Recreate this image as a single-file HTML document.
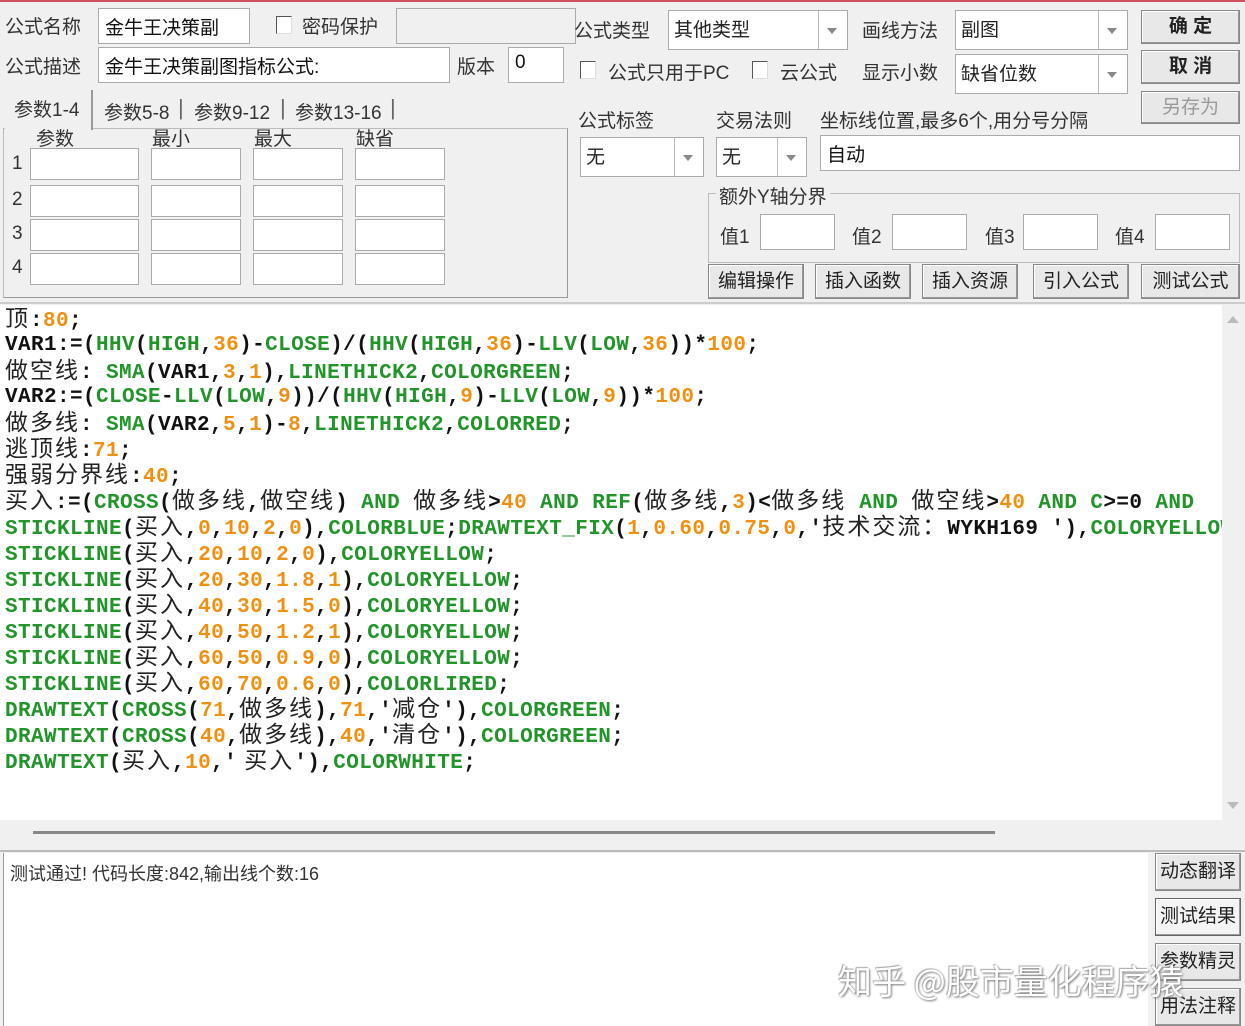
<!DOCTYPE html>
<html><head><meta charset="utf-8"><style>
*{margin:0;padding:0;box-sizing:border-box}
body{width:1245px;height:1026px;background:#f0f0f0;position:relative;overflow:hidden;font-family:"Liberation Sans","Noto Sans CJK SC",sans-serif;font-size:19px;color:#222}
.a{position:absolute}
.l{position:absolute;white-space:nowrap;color:#333}
.in{position:absolute;background:#fff;border:1px solid #aaa;white-space:nowrap;padding:4px 6px;font-size:19px;color:#111}
.dd{position:absolute;background:#fff;border:1px solid #aaa;padding:4px 5px;font-size:19px}
.dd::after{content:"";position:absolute;right:0;top:0;bottom:0;width:28px;border-left:1px solid #bbb;background:#fff}
.dd::before{content:"";position:absolute;right:10px;top:50%;margin-top:-2px;border:5px solid transparent;border-top:6px solid #888;z-index:2}
.btn{position:absolute;background:#e8e8e8;border:1px solid #888;box-shadow:inset -1px -1px 0 #999,inset 1px 1px 0 #fff;text-align:center;font-size:19px;color:#222;white-space:nowrap}
.cb{position:absolute;width:16px;height:18px;border:1px solid #555;border-right-color:#ddd;border-bottom-color:#ddd;background:#fff}
.code{position:absolute;left:0;top:305px;width:1222px;height:515px;background:#fff;overflow:hidden}
.code pre{position:absolute;left:5px;top:2px;font-family:"Liberation Mono",monospace;font-weight:bold;font-size:21px;letter-spacing:0.4px;line-height:26px;color:#111}
.code pre div{height:26px}
.g{color:#22952a}.o{color:#f09010}
.c{font-family:"Noto Sans CJK SC",sans-serif;font-weight:normal;font-size:23px;letter-spacing:2px;color:#222;line-height:18px}
</style></head><body>
<div class="a" style="left:0;top:0;width:1245px;height:2px;background:#d05060"></div>

<div class="l" style="left:5px;top:12px">公式名称</div>
<div class="in" style="left:98px;top:8px;width:152px;height:36px">金牛王决策副</div>
<div class="cb" style="left:276px;top:16px"></div>
<div class="l" style="left:302px;top:12px">密码保护</div>
<div class="in" style="left:396px;top:8px;width:180px;height:36px;background:#f0f0f0"></div>
<div class="l" style="left:5px;top:52px">公式描述</div>
<div class="in" style="left:98px;top:47px;width:352px;height:36px">金牛王决策副图指标公式:</div>
<div class="l" style="left:457px;top:52px">版本</div>
<div class="in" style="left:508px;top:47px;width:56px;height:36px">0</div>

<div class="a" style="left:3px;top:128px;width:565px;height:170px;border:1px solid #bbb;border-right-color:#999;border-bottom-color:#999"></div>
<div class="a" style="left:5px;top:90px;width:88px;height:40px;background:#f0f0f0;border-right:2px solid #999"></div>
<div class="l" style="left:14px;top:95px">参数1-4</div>
<div class="l" style="left:104px;top:98px">参数5-8</div>
<div class="l" style="left:178px;top:95px;font-size:22px;color:#666">|</div>
<div class="l" style="left:194px;top:98px">参数9-12</div>
<div class="l" style="left:280px;top:95px;font-size:22px;color:#666">|</div>
<div class="l" style="left:295px;top:98px">参数13-16</div>
<div class="l" style="left:390px;top:95px;font-size:22px;color:#666">|</div>
<div class="l" style="left:36px;top:124px">参数</div>
<div class="l" style="left:152px;top:124px">最小</div>
<div class="l" style="left:254px;top:124px">最大</div>
<div class="l" style="left:356px;top:124px">缺省</div>
<div class="l" style="left:12px;top:153px">1</div><div class="l" style="left:12px;top:189px">2</div><div class="l" style="left:12px;top:223px">3</div><div class="l" style="left:12px;top:257px">4</div>
<div class="in" style="left:30px;top:148px;width:109px;height:32px"></div><div class="in" style="left:151px;top:148px;width:90px;height:32px"></div><div class="in" style="left:253px;top:148px;width:90px;height:32px"></div><div class="in" style="left:355px;top:148px;width:90px;height:32px"></div>
<div class="in" style="left:30px;top:185px;width:109px;height:32px"></div><div class="in" style="left:151px;top:185px;width:90px;height:32px"></div><div class="in" style="left:253px;top:185px;width:90px;height:32px"></div><div class="in" style="left:355px;top:185px;width:90px;height:32px"></div>
<div class="in" style="left:30px;top:219px;width:109px;height:32px"></div><div class="in" style="left:151px;top:219px;width:90px;height:32px"></div><div class="in" style="left:253px;top:219px;width:90px;height:32px"></div><div class="in" style="left:355px;top:219px;width:90px;height:32px"></div>
<div class="in" style="left:30px;top:253px;width:109px;height:32px"></div><div class="in" style="left:151px;top:253px;width:90px;height:32px"></div><div class="in" style="left:253px;top:253px;width:90px;height:32px"></div><div class="in" style="left:355px;top:253px;width:90px;height:32px"></div>

<div class="l" style="left:574px;top:16px">公式类型</div>
<div class="dd" style="left:668px;top:10px;width:180px;height:40px">其他类型</div>
<div class="l" style="left:862px;top:16px">画线方法</div>
<div class="dd" style="left:955px;top:10px;width:173px;height:40px">副图</div>
<div class="btn" style="left:1141px;top:10px;width:99px;height:34px;line-height:32px;font-weight:bold">确 定</div>
<div class="cb" style="left:580px;top:61px"></div>
<div class="l" style="left:608px;top:58px">公式只用于PC</div>
<div class="cb" style="left:752px;top:61px"></div>
<div class="l" style="left:780px;top:58px">云公式</div>
<div class="l" style="left:862px;top:58px">显示小数</div>
<div class="dd" style="left:955px;top:54px;width:173px;height:40px">缺省位数</div>
<div class="btn" style="left:1141px;top:50px;width:99px;height:34px;line-height:32px;font-weight:bold">取 消</div>
<div class="btn" style="left:1141px;top:91px;width:99px;height:33px;line-height:31px;color:#999">另存为</div>
<div class="l" style="left:578px;top:106px">公式标签</div>
<div class="l" style="left:716px;top:106px">交易法则</div>
<div class="l" style="left:820px;top:106px">坐标线位置,最多6个,用分号分隔</div>
<div class="dd" style="left:580px;top:137px;width:124px;height:40px">无</div>
<div class="dd" style="left:716px;top:137px;width:91px;height:40px">无</div>
<div class="in" style="left:820px;top:135px;width:420px;height:36px">自动</div>
<div class="a" style="left:708px;top:193px;width:532px;height:70px;border:1px solid #bbb"></div>
<div class="l" style="left:716px;top:182px;background:#f0f0f0;padding:0 3px">额外Y轴分界</div>
<div class="l" style="left:720px;top:222px">值1</div><div class="in" style="left:760px;top:214px;width:75px;height:36px"></div>
<div class="l" style="left:852px;top:222px">值2</div><div class="in" style="left:892px;top:214px;width:75px;height:36px"></div>
<div class="l" style="left:985px;top:222px">值3</div><div class="in" style="left:1023px;top:214px;width:75px;height:36px"></div>
<div class="l" style="left:1115px;top:222px">值4</div><div class="in" style="left:1155px;top:214px;width:75px;height:36px"></div>
<div class="btn" style="left:708px;top:264px;width:96px;height:35px;line-height:33px">编辑操作</div>
<div class="btn" style="left:815px;top:264px;width:96px;height:35px;line-height:33px">插入函数</div>
<div class="btn" style="left:922px;top:264px;width:96px;height:35px;line-height:33px">插入资源</div>
<div class="btn" style="left:1033px;top:264px;width:96px;height:35px;line-height:33px">引入公式</div>
<div class="btn" style="left:1141px;top:264px;width:99px;height:35px;line-height:33px">测试公式</div>

<div class="a" style="left:0;top:302px;width:1245px;height:2px;background:#ccc"></div>
<div class="code"><pre><div><span class="c">顶</span>:<span class="o">80</span>;</div><div>VAR1:=(<span class="g">HHV</span>(<span class="g">HIGH</span>,<span class="o">36</span>)-<span class="g">CLOSE</span>)/(<span class="g">HHV</span>(<span class="g">HIGH</span>,<span class="o">36</span>)-<span class="g">LLV</span>(<span class="g">LOW</span>,<span class="o">36</span>))*<span class="o">100</span>;</div><div><span class="c">做空线</span>: <span class="g">SMA</span>(VAR1,<span class="o">3</span>,<span class="o">1</span>),<span class="g">LINETHICK2</span>,<span class="g">COLORGREEN</span>;</div><div>VAR2:=(<span class="g">CLOSE</span>-<span class="g">LLV</span>(<span class="g">LOW</span>,<span class="o">9</span>))/(<span class="g">HHV</span>(<span class="g">HIGH</span>,<span class="o">9</span>)-<span class="g">LLV</span>(<span class="g">LOW</span>,<span class="o">9</span>))*<span class="o">100</span>;</div><div><span class="c">做多线</span>: <span class="g">SMA</span>(VAR2,<span class="o">5</span>,<span class="o">1</span>)-<span class="o">8</span>,<span class="g">LINETHICK2</span>,<span class="g">COLORRED</span>;</div><div><span class="c">逃顶线</span>:<span class="o">71</span>;</div><div><span class="c">强弱分界线</span>:<span class="o">40</span>;</div><div><span class="c">买入</span>:=(<span class="g">CROSS</span>(<span class="c">做多线</span>,<span class="c">做空线</span>) <span class="g">AND</span> <span class="c">做多线</span>&gt;<span class="o">40</span> <span class="g">AND</span> <span class="g">REF</span>(<span class="c">做多线</span>,<span class="o">3</span>)&lt;<span class="c">做多线</span> <span class="g">AND</span> <span class="c">做空线</span>&gt;<span class="o">40</span> <span class="g">AND</span> <span class="g">C</span>&gt;=0 <span class="g">AND</span></div><div><span class="g">STICKLINE</span>(<span class="c">买入</span>,<span class="o">0</span>,<span class="o">10</span>,<span class="o">2</span>,<span class="o">0</span>),<span class="g">COLORBLUE</span>;<span class="g">DRAWTEXT_FIX</span>(<span class="o">1</span>,<span class="o">0.60</span>,<span class="o">0.75</span>,<span class="o">0</span>,'<span class="c">技术交流：</span>WYKH169 '),<span class="g">COLORYELLOW</span></div><div><span class="g">STICKLINE</span>(<span class="c">买入</span>,<span class="o">20</span>,<span class="o">10</span>,<span class="o">2</span>,<span class="o">0</span>),<span class="g">COLORYELLOW</span>;</div><div><span class="g">STICKLINE</span>(<span class="c">买入</span>,<span class="o">20</span>,<span class="o">30</span>,<span class="o">1.8</span>,<span class="o">1</span>),<span class="g">COLORYELLOW</span>;</div><div><span class="g">STICKLINE</span>(<span class="c">买入</span>,<span class="o">40</span>,<span class="o">30</span>,<span class="o">1.5</span>,<span class="o">0</span>),<span class="g">COLORYELLOW</span>;</div><div><span class="g">STICKLINE</span>(<span class="c">买入</span>,<span class="o">40</span>,<span class="o">50</span>,<span class="o">1.2</span>,<span class="o">1</span>),<span class="g">COLORYELLOW</span>;</div><div><span class="g">STICKLINE</span>(<span class="c">买入</span>,<span class="o">60</span>,<span class="o">50</span>,<span class="o">0.9</span>,<span class="o">0</span>),<span class="g">COLORYELLOW</span>;</div><div><span class="g">STICKLINE</span>(<span class="c">买入</span>,<span class="o">60</span>,<span class="o">70</span>,<span class="o">0.6</span>,<span class="o">0</span>),<span class="g">COLORLIRED</span>;</div><div><span class="g">DRAWTEXT</span>(<span class="g">CROSS</span>(<span class="o">71</span>,<span class="c">做多线</span>),<span class="o">71</span>,'<span class="c">减仓</span>'),<span class="g">COLORGREEN</span>;</div><div><span class="g">DRAWTEXT</span>(<span class="g">CROSS</span>(<span class="o">40</span>,<span class="c">做多线</span>),<span class="o">40</span>,'<span class="c">清仓</span>'),<span class="g">COLORGREEN</span>;</div><div><span class="g">DRAWTEXT</span>(<span class="c">买入</span>,<span class="o">10</span>,'<span class="c"> 买入</span>'),<span class="g">COLORWHITE</span>;</div></pre></div>
<div class="a" style="left:1222px;top:305px;width:23px;height:515px;background:#f0f0f0"></div>
<div class="a" style="left:1227px;top:316px;border:6px solid transparent;border-bottom:7px solid #bbb;border-top:0"></div>
<div class="a" style="left:1227px;top:802px;border:6px solid transparent;border-top:7px solid #bbb;border-bottom:0"></div>
<div class="a" style="left:0;top:820px;width:1245px;height:30px;background:#f0f0f0"></div>
<div class="a" style="left:33px;top:831px;width:962px;height:3px;background:#888"></div>
<div class="a" style="left:0;top:850px;width:1245px;height:2px;background:#bbb"></div>
<div class="a" style="left:3px;top:853px;width:1145px;height:173px;background:#fff;border-left:1px solid #999"></div>
<div class="l" style="left:10px;top:860px;font-size:18px;color:#333">测试通过! 代码长度:842,输出线个数:16</div>
<div class="btn" style="left:1155px;top:853px;width:86px;height:38px;line-height:36px">动态翻译</div>
<div class="btn" style="left:1155px;top:898px;width:86px;height:38px;line-height:36px;background:#f4f4f4;border-color:#666">测试结果</div>
<div class="btn" style="left:1155px;top:943px;width:86px;height:38px;line-height:36px">参数精灵</div>
<div class="btn" style="left:1155px;top:988px;width:86px;height:38px;line-height:36px">用法注释</div>
<div class="l" style="left:838px;top:955px;font-size:34px;color:#fff;text-shadow:1px 1px 2px #777,-1px -1px 1px #aaa;font-family:'Noto Sans CJK SC',sans-serif">知乎 @股市量化程序猿</div>
</body></html>
